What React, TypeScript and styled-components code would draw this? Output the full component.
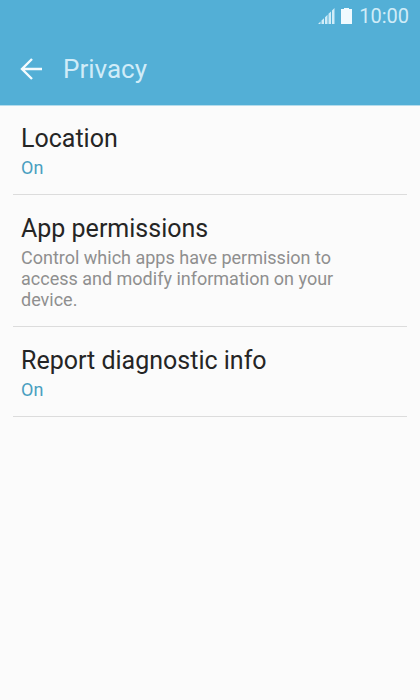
import React from "react";
import styled, { createGlobalStyle } from "styled-components";

const GlobalStyle = createGlobalStyle`
  * { box-sizing: border-box; }
  body { margin: 0; background: #fbfbfb; font-family: Roboto, sans-serif; }
`;

const Screen = styled.div`
  min-height: 100vh;
  background: #fbfbfb;
`;

const Header = styled.header`
  background: #53afd6;
  color: #d0ecf8;
  box-shadow: 0 1px 0 #b5dcec;
`;

const StatusBar = styled.div`
  display: flex;
  align-items: center;
  justify-content: flex-end;
  height: 32px;
  padding-right: 11px;
  font-size: 20px;
  line-height: 32px;
`;

const SignalIcon = styled.svg`
  width: 17px;
  height: 16px;
  margin-right: 6px;
`;

const BatteryIcon = styled.svg`
  width: 11px;
  height: 16px;
  margin-right: 7px;
`;

const TitleBar = styled.div`
  display: flex;
  align-items: center;
  height: 73px;
  padding: 0 20px;
  gap: 20px;
`;

const BackButton = styled.button`
  display: flex;
  padding: 0;
  border: 0;
  background: none;
  color: #f4fbfe;
  cursor: pointer;
`;

const Title = styled.h1`
  margin: 0;
  font-size: 26px;
  line-height: 32px;
  font-weight: 400;
`;

const List = styled.ul`
  margin: 0;
  padding: 0 13px;
  list-style: none;
`;

const Item = styled.li`
  border-bottom: 1px solid #dcdcdc;
`;

const ItemButton = styled.button`
  display: flex;
  flex-direction: column;
  gap: 1px;
  width: 100%;
  padding: 17px 50px 16px 8px;
  border: 0;
  background: none;
  font-family: inherit;
  text-align: left;
  cursor: pointer;
`;

const ItemTitle = styled.span`
  font-size: 25px;
  line-height: 34px;
  color: #252525;
`;

const ItemNote = styled.span<{ $active?: boolean }>`
  font-size: 18px;
  line-height: 21px;
  color: ${(p) => (p.$active ? "#4a9fc0" : "#8f8f8f")};
`;

const items = [
  { title: "Location", note: "On", active: true },
  {
    title: "App permissions",
    note: "Control which apps have permission to access and modify information on your device.",
    active: false,
  },
  { title: "Report diagnostic info", note: "On", active: true },
];

export default function App() {
  return (
    <Screen>
      <GlobalStyle />
      <Header>
        <StatusBar>
          <SignalIcon viewBox="0 0 17 16" fill="currentColor" aria-hidden="true">
            <path d="M0 16l2.5-2.4V16zM3.5 12.6l2.5-2.4V16H3.5zM7 9.2l2.5-2.4V16H7zM10.5 5.8L13 3.4V16h-2.5zM14 2.4L16.5 0v16H14z" />
          </SignalIcon>
          <BatteryIcon viewBox="0 0 11 16" fill="#f0faff" aria-hidden="true">
            <path d="M3 0h5v1h3v15H0V1h3z" />
          </BatteryIcon>
          <time>10:00</time>
        </StatusBar>
        <TitleBar>
          <BackButton aria-label="Back">
            <svg width="23" height="22" viewBox="0 0 23 22" fill="none" stroke="currentColor" strokeWidth="2.4">
              <path d="M22 11H3M12 1L2 11l10 10" />
            </svg>
          </BackButton>
          <Title>Privacy</Title>
        </TitleBar>
      </Header>
      <List>
        {items.map((item) => (
          <Item key={item.title}>
            <ItemButton>
              <ItemTitle>{item.title}</ItemTitle>
              <ItemNote $active={item.active}>{item.note}</ItemNote>
            </ItemButton>
          </Item>
        ))}
      </List>
    </Screen>
  );
}
